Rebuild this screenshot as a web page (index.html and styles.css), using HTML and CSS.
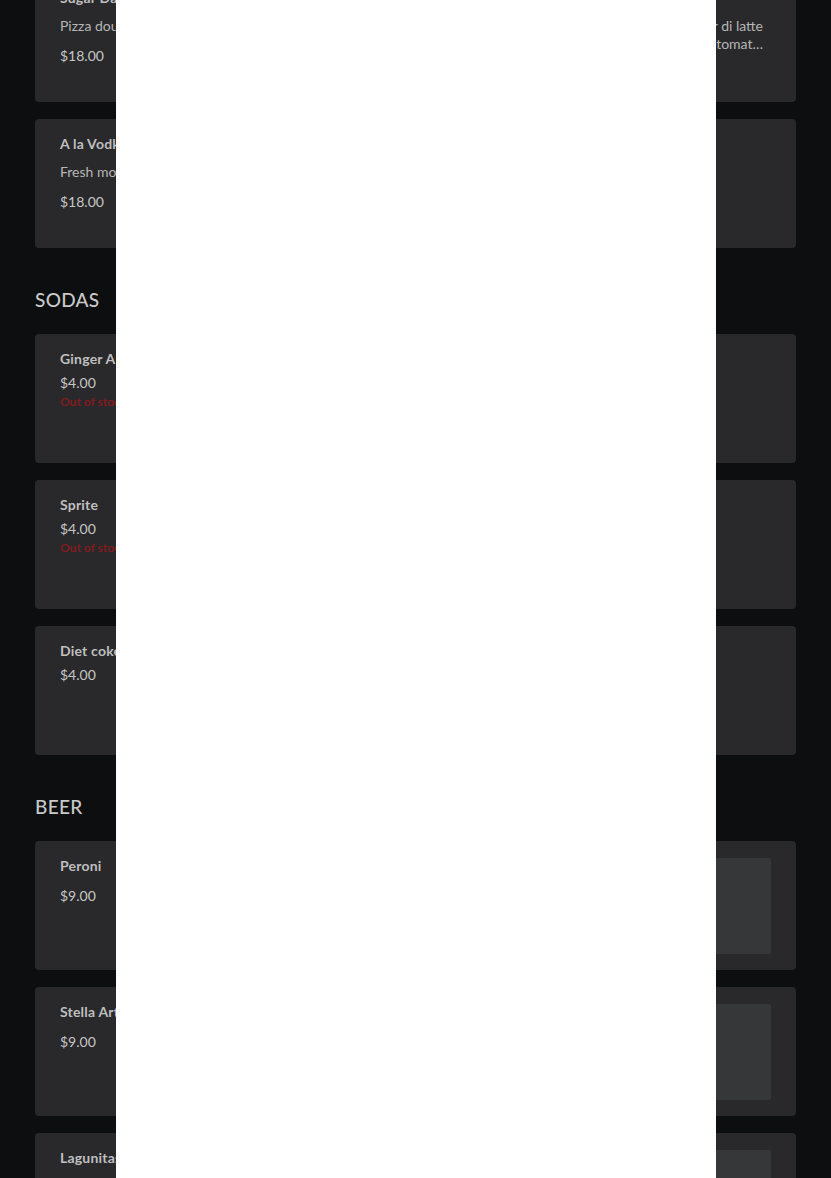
FILE: index.html
```html
<!DOCTYPE html>
<html lang="en">
<head>
<meta charset="utf-8">
<title>Menu</title>
<link rel="stylesheet" href="styles.css">
</head>
<body>
<main class="menu">
  <section class="section section-first">
    <div class="item">
      <div class="item-text">
        <h3 class="item-title">Sugar Daddy</h3>
        <p class="desc desc-split"><span>Pizza dough, crushed San Marzano tomato,</span> <span>spicy soppressata, hot honey, fior di latte</span></p>
        <div class="price-row">
          <span class="price">$18.00</span>
          <span class="desc-more">parmigiano, olive oil, sea salt, cherry tomat…</span>
        </div>
      </div>
    </div>
    <div class="item">
      <div class="item-text">
        <h3 class="item-title">A la Vodka</h3>
        <p class="desc">Fresh mozzarella, vodka sauce, basil, parmigiano, olive oil</p>
        <span class="price">$18.00</span>
      </div>
    </div>
  </section>

  <section class="section">
    <h2 class="section-title">SODAS</h2>
    <div class="item">
      <div class="item-text">
        <h3 class="item-title">Ginger Ale</h3>
        <span class="price price-tight">$4.00</span>
        <span class="stock">Out of stock</span>
      </div>
    </div>
    <div class="item">
      <div class="item-text">
        <h3 class="item-title">Sprite</h3>
        <span class="price price-tight">$4.00</span>
        <span class="stock">Out of stock</span>
      </div>
    </div>
    <div class="item">
      <div class="item-text">
        <h3 class="item-title">Diet coke</h3>
        <span class="price price-tight">$4.00</span>
      </div>
    </div>
  </section>

  <section class="section">
    <h2 class="section-title">BEER</h2>
    <div class="item">
      <div class="item-text">
        <h3 class="item-title">Peroni</h3>
        <span class="price">$9.00</span>
      </div>
      <div class="thumb"></div>
    </div>
    <div class="item">
      <div class="item-text">
        <h3 class="item-title">Stella Artois</h3>
        <span class="price">$9.00</span>
      </div>
      <div class="thumb"></div>
    </div>
    <div class="item">
      <div class="item-text">
        <h3 class="item-title">Lagunitas IPA</h3>
        <span class="price">$9.00</span>
      </div>
      <div class="thumb"></div>
    </div>
  </section>
</main>

<div class="modal" role="dialog" aria-modal="true"></div>
</body>
</html>
```

FILE: styles.css
```css
* {
  box-sizing: border-box;
}

html, body {
  margin: 0;
  padding: 0;
  background: #0c0e10;
  overflow: hidden;
}

body {
  font-family: "Lato", "Liberation Sans", sans-serif;
  color: #c4c4c4;
}

.menu {
  padding: 0 35px;
  margin-top: -27px;
}

.section {
  display: flex;
  flex-direction: column;
  gap: 17px;
}

.section-title {
  margin: 40px 0 5px;
  font-size: 19px;
  line-height: 24px;
  font-weight: 500;
  color: #c9c9c9;
  letter-spacing: 0.3px;
}

.item {
  display: flex;
  align-items: flex-start;
  gap: 16px;
  min-height: 129px;
  padding: 16px 25px;
  background: #29292b;
  border-radius: 4px;
}

.item-text {
  flex: 1;
  min-width: 0;
  display: flex;
  flex-direction: column;
  align-items: flex-start;
}

.item-title {
  margin: 0;
  font-size: 14px;
  line-height: 18px;
  font-weight: 700;
  color: #bfbfbf;
  letter-spacing: 0.2px;
}

.desc {
  margin: 10px 0 0;
  width: 100%;
  padding-right: 8px;
  font-size: 14px;
  line-height: 18px;
  color: #b6b6b6;
  white-space: nowrap;
  overflow: hidden;
}

.desc-split {
  display: flex;
  justify-content: space-between;
  gap: 12px;
}

.price-row {
  display: flex;
  align-items: flex-start;
  width: 100%;
  padding-right: 8px;
}

.desc-more {
  margin-left: auto;
  font-size: 14px;
  line-height: 18px;
  color: #b6b6b6;
  white-space: nowrap;
}

.price {
  margin-top: 11px;
  font-size: 14px;
  line-height: 20px;
  color: #c6c6c6;
}

.price-tight {
  margin-top: 5px;
}

.stock {
  margin-top: 1px;
  font-size: 12px;
  line-height: 16px;
  font-weight: 700;
  color: #801c1f;
}

.thumb {
  flex: 0 0 96px;
  width: 96px;
  height: 96px;
  margin-top: 1px;
  background: #363739;
  border-radius: 2px;
}

.modal {
  position: fixed;
  top: 0;
  bottom: 0;
  left: 116px;
  width: 600px;
  background: #ffffff;
}
```
